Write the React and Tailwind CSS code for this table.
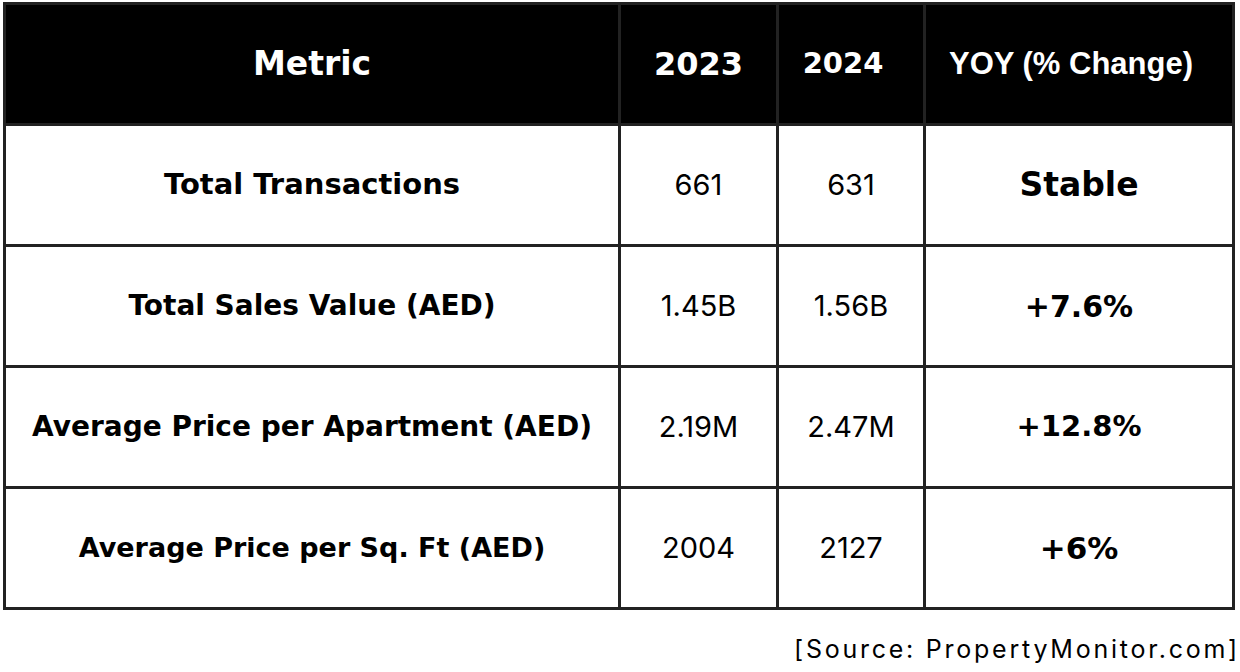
import React from 'react'

const rows = [
    { metric: 'Total Transactions', metricSize: 'text-[29px]', y23: '661', y24: '631', yoy: 'Stable', yoySize: 'text-[33px]' },
    { metric: 'Total Sales Value (AED)', metricSize: 'text-[28px]', y23: '1.45B', y24: '1.56B', yoy: '+7.6%', yoySize: 'text-[30px]' },
    { metric: 'Average Price per Apartment (AED)', metricSize: 'text-[28px]', y23: '2.19M', y24: '2.47M', yoy: '+12.8%', yoySize: 'text-[29px]' },
    { metric: 'Average Price per Sq. Ft (AED)', metricSize: 'text-[27px]', y23: '2004', y24: '2127', yoy: '+6%', yoySize: 'text-[31px]' },
]

const App = () => {
    return (
        <div className="w-[1240px] h-[672px] bg-white pt-[2px] pl-[3px] font-['Inter',sans-serif] text-black">
            <table className="w-[1232px] border-collapse border-[3px] border-[#222] table-fixed">
                <colgroup>
                    <col className="w-[615px]" />
                    <col className="w-[158px]" />
                    <col className="w-[147px]" />
                    <col className="w-[309px]" />
                </colgroup>
                <thead>
                    <tr className="h-[121px] bg-black text-white font-['DejaVu_Sans',sans-serif] font-bold">
                        <th className="border-[3px] border-[#222] text-[33px]">Metric</th>
                        <th className="border-[3px] border-[#222] text-[32px]">2023</th>
                        <th className="border-[3px] border-[#222] text-[29px] pr-[16px]">2024</th>
                        <th className="border-[3px] border-[#222] text-[31px] pr-[16px] font-['Liberation_Sans',sans-serif]">YOY (% Change)</th>
                    </tr>
                </thead>
                <tbody>
                    {rows.map((row, i) => (
                        <tr key={i} className="h-[121px]">
                            <td className={`border-[3px] border-[#222] text-center font-bold font-['DejaVu_Sans',sans-serif] ${row.metricSize}`}>{row.metric}</td>
                            <td className="border-[3px] border-[#222] text-center text-[29px]">{row.y23}</td>
                            <td className="border-[3px] border-[#222] text-center text-[29px]">{row.y24}</td>
                            <td className={`border-[3px] border-[#222] text-center font-bold font-['DejaVu_Sans',sans-serif] ${row.yoySize}`}>{row.yoy}</td>
                        </tr>
                    ))}
                </tbody>
            </table>
            <div className="w-[1237px] text-right mt-[21px] text-[25px] tracking-[2.75px]">
                [Source: PropertyMonitor.com]
            </div>
        </div>
    )
}

export default App
